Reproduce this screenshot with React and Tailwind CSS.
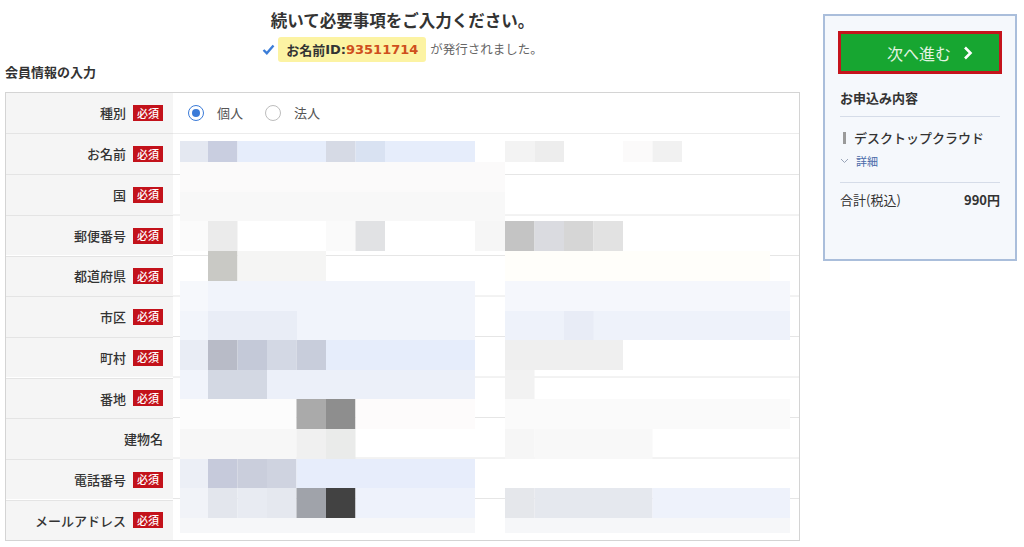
import React from 'react';

const JP = { fontFamily: '"Noto Sans CJK JP", "Noto Sans", sans-serif' };

const rows = [
  { label: '種別', req: true },
  { label: 'お名前', req: true },
  { label: '国', req: true },
  { label: '郵便番号', req: true },
  { label: '都道府県', req: true },
  { label: '市区', req: true },
  { label: '町村', req: true },
  { label: '番地', req: true },
  { label: '建物名', req: false },
  { label: '電話番号', req: true },
  { label: 'メールアドレス', req: true },
];

// mosaic (blurred personal data), absolute page coords: [y1, y2, [[x1, x2, colour], ...]]
const MOSAIC = [
  [140, 161, [[180, 208, '#e4e8f1'], [208, 237.5, '#c9cee0'], [237.5, 326, '#e6edfb'], [326, 355.5, '#d6dae5'], [355.5, 385, '#d9e2f2'], [385, 475, '#e6edfb'], [505, 534.5, '#f3f3f3'], [534.5, 564, '#ededed'], [623, 652.5, '#fbfafa'], [652.5, 682, '#f1f1f1']]],
  [161, 191, [[180, 505, '#fbfafa']]],
  [191, 220, [[180, 505, '#f8f8f8']]],
  [220, 250, [[180, 208, '#fbfbfb'], [208, 237.5, '#ebebeb'], [326, 355.5, '#fafafa'], [355.5, 385, '#e1e2e4'], [475, 505, '#f6f6f6'], [505, 534.5, '#c4c4c4'], [534.5, 564, '#dadbe0'], [564, 593.5, '#d6d6d6'], [593.5, 623, '#e2e2e2']]],
  [250, 280, [[208, 237.5, '#c9c9c5'], [237.5, 326, '#f5f5f4'], [505, 770, '#fffefa']]],
  [280, 310, [[180, 208, '#f6f8fc'], [208, 475, '#f1f4fb'], [505, 790, '#f5f7fc']]],
  [310, 339, [[180, 208, '#f2f5fb'], [208, 297, '#e9edf6'], [297, 475, '#f1f4fb'], [505, 790, '#eef2fa'], [564, 593.5, '#e8ecf6']]],
  [339, 369, [[180, 208, '#e9edf5'], [208, 237.5, '#b8bbc7'], [237.5, 267, '#c4c9d8'], [267, 296.5, '#d3d8e4'], [296.5, 326, '#c8cddb'], [326, 475, '#e6edfb'], [505, 623, '#efefef']]],
  [369, 398, [[180, 208, '#f1f4fb'], [208, 267, '#d3d8e3'], [267, 475, '#ecf0f9'], [505, 534.5, '#f2f2f2']]],
  [398, 428, [[180, 296.5, '#fcfcfc'], [296.5, 326, '#aaaaaa'], [326, 355.5, '#8e8e8e'], [355.5, 475, '#fdfbfb'], [505, 790, '#fafafa']]],
  [428, 458, [[180, 296.5, '#f7f7f7'], [296.5, 326, '#f0f0f0'], [326, 355.5, '#eaebea'], [505, 534.5, '#f6f6f6'], [534.5, 652.5, '#f8f8f8']]],
  [458, 487, [[180, 208, '#eceff6'], [208, 237.5, '#c6cadb'], [237.5, 267, '#cacedc'], [267, 296.5, '#cfd3e0'], [296.5, 475, '#e7edfb']]],
  [487, 517, [[180, 208, '#f1f3f8'], [208, 237.5, '#e3e6ed'], [237.5, 267, '#e8ebf2'], [267, 296.5, '#e5e8ef'], [296.5, 326, '#a0a3aa'], [326, 355.5, '#424242'], [355.5, 475, '#eef2fb'], [505, 534.5, '#e5e7eb'], [534.5, 652.5, '#e5e8ee'], [652.5, 790, '#eef2fb']]],
  [517, 532, [[180, 475, '#f6f7f9'], [505, 790, '#f6f7f9']]],
];

function Mosaic() {
  const lines = [173.5, 214, 254.5, 295, 335.5, 376, 416.5, 457, 497.5];
  return (
    <svg className="block w-full h-full" viewBox="173 133 626 406" preserveAspectRatio="none">
      {lines.map((y) => (
        <line key={y} x1="173" x2="799" y1={y} y2={y} stroke="#e6e6e6" strokeWidth="1" />
      ))}
      {MOSAIC.map(([y1, y2, segs]) =>
        segs.map(([x1, x2, c]) => (
          <rect key={`${y1}-${x1}`} x={x1} y={y1} width={x2 - x1} height={y2 - y1} fill={c} />
        ))
      )}
    </svg>
  );
}

function Badge() {
  return (
    <span className="inline-flex items-center justify-center w-[30px] h-[16px] bg-[#c3121b] text-white text-[11px] leading-none">
      必須
    </span>
  );
}

function Radio({ checked, label }) {
  return (
    <label className="flex items-center gap-[13px] text-[13px] text-[#555]">
      {checked ? (
        <span className="w-[16px] h-[16px] rounded-full border-[1.5px] border-[#3b7bd8] flex items-center justify-center bg-white">
          <span className="w-[8px] h-[8px] rounded-full bg-[#3b7bd8]" />
        </span>
      ) : (
        <span className="w-[16px] h-[16px] rounded-full border border-[#bdbdbd] bg-white" />
      )}
      {label}
    </label>
  );
}

function MemberTable() {
  return (
    <div className="border border-[#d4d4d4] grid grid-cols-[167px_1fr]">
      {rows.map((r, i) => (
        <div
          key={r.label}
          className={`h-[40.45px] bg-[#f5f5f5] flex items-center justify-end gap-[7px] pr-[10px] text-[13px] font-medium text-[#333] ${i > 0 ? 'border-t border-[#e4e4e4]' : ''}`}
          style={{ gridColumn: 1, gridRow: i + 1 }}
        >
          <span>{r.label}</span>
          {r.req && <Badge />}
        </div>
      ))}
      <div className="flex items-center gap-[22px] pl-[15px]" style={{ gridColumn: 2, gridRow: 1 }}>
        <Radio checked label="個人" />
        <Radio label="法人" />
      </div>
      <div style={{ gridColumn: 2, gridRow: '2 / span 10' }} className="border-t border-[#ececec]">
        <Mosaic />
      </div>
    </div>
  );
}

function Sidebar() {
  return (
    <aside className="w-[194px] h-[247px] mt-[14px] border-2 border-[#aabedb] bg-[#f5f8fc] px-[13px] pt-[15px]">
      <button className="w-[164px] h-[43px] border-[3px] border-[#c5141c] bg-[#17a631] flex items-center justify-center gap-[12px] pl-[20px] text-[16px] text-[#e3f4e3]">
        <span>次へ進む</span>
        <svg width="10" height="14" viewBox="0 0 10 14">
          <path d="M2 1.5 L7.5 7 L2 12.5" fill="none" stroke="#ffffff" strokeWidth="2.6" />
        </svg>
      </button>
      <div className="px-[2px]">
        <div className="mt-[15px] text-[13px] font-bold text-[#333] leading-[18px]">お申込み内容</div>
        <div className="mt-[9px] border-t border-[#d5dce8]" />
        <div className="mt-[12px] flex items-center gap-[8px] text-[13px] font-medium text-[#333] leading-[18px]">
          <span className="w-[3px] h-[12px] bg-[#9a9a9a] ml-[3px]" />
          <span>デスクトップクラウド</span>
        </div>
        <div className="mt-[6px] flex items-center gap-[7px] text-[11px] text-[#4a6aa8] leading-[16px]">
          <svg width="9" height="6" viewBox="0 0 9 6">
            <path d="M1 1 L4.5 4.5 L8 1" fill="none" stroke="#9aa5b8" strokeWidth="1" />
          </svg>
          <span>詳細</span>
        </div>
        <div className="mt-[13px] border-t border-[#d5dce8]" />
        <div className="mt-[8px] flex justify-between items-center text-[13px] text-[#333] leading-[18px]">
          <span>合計(税込)</span>
          <span className="font-bold">990円</span>
        </div>
      </div>
    </aside>
  );
}

export default function App() {
  return (
    <div className="w-[1024px] h-[547px] bg-white flex pl-[5px] overflow-hidden" style={JP}>
      <main className="w-[795px]">
        <h1 className="mt-[8px] h-[24px] leading-[24px] text-center text-[16.5px] font-bold text-[#333]">
          続いて必要事項をご入力ください。
        </h1>
        <div className="mt-[5px] h-[25px] flex items-center justify-center">
          <svg width="13" height="11" viewBox="0 0 13 11" className="mr-[3px]">
            <path d="M1.5 6 L4.8 9.2 L11.5 1.5" fill="none" stroke="#3b7dd8" strokeWidth="2.4" />
          </svg>
          <span className="h-[25px] px-[8px] flex items-center bg-[#fcf3a3] rounded-[3px] text-[13px] font-bold text-[#333]">
            お名前<span style={{ fontFamily: '"DejaVu Sans", sans-serif' }}>ID:</span>
            <span className="text-[#cf4f1c]" style={{ fontFamily: '"DejaVu Sans", sans-serif' }}>93511714</span>
          </span>
          <span className="ml-[4px] text-[12.5px] text-[#666]">が発行されました。</span>
        </div>
        <h2 className="h-[20px] leading-[20px] text-[13px] font-bold text-[#333]">会員情報の入力</h2>
        <div className="mt-[10px]">
          <MemberTable />
        </div>
      </main>
      <div className="ml-[23px]">
        <Sidebar />
      </div>
    </div>
  );
}
